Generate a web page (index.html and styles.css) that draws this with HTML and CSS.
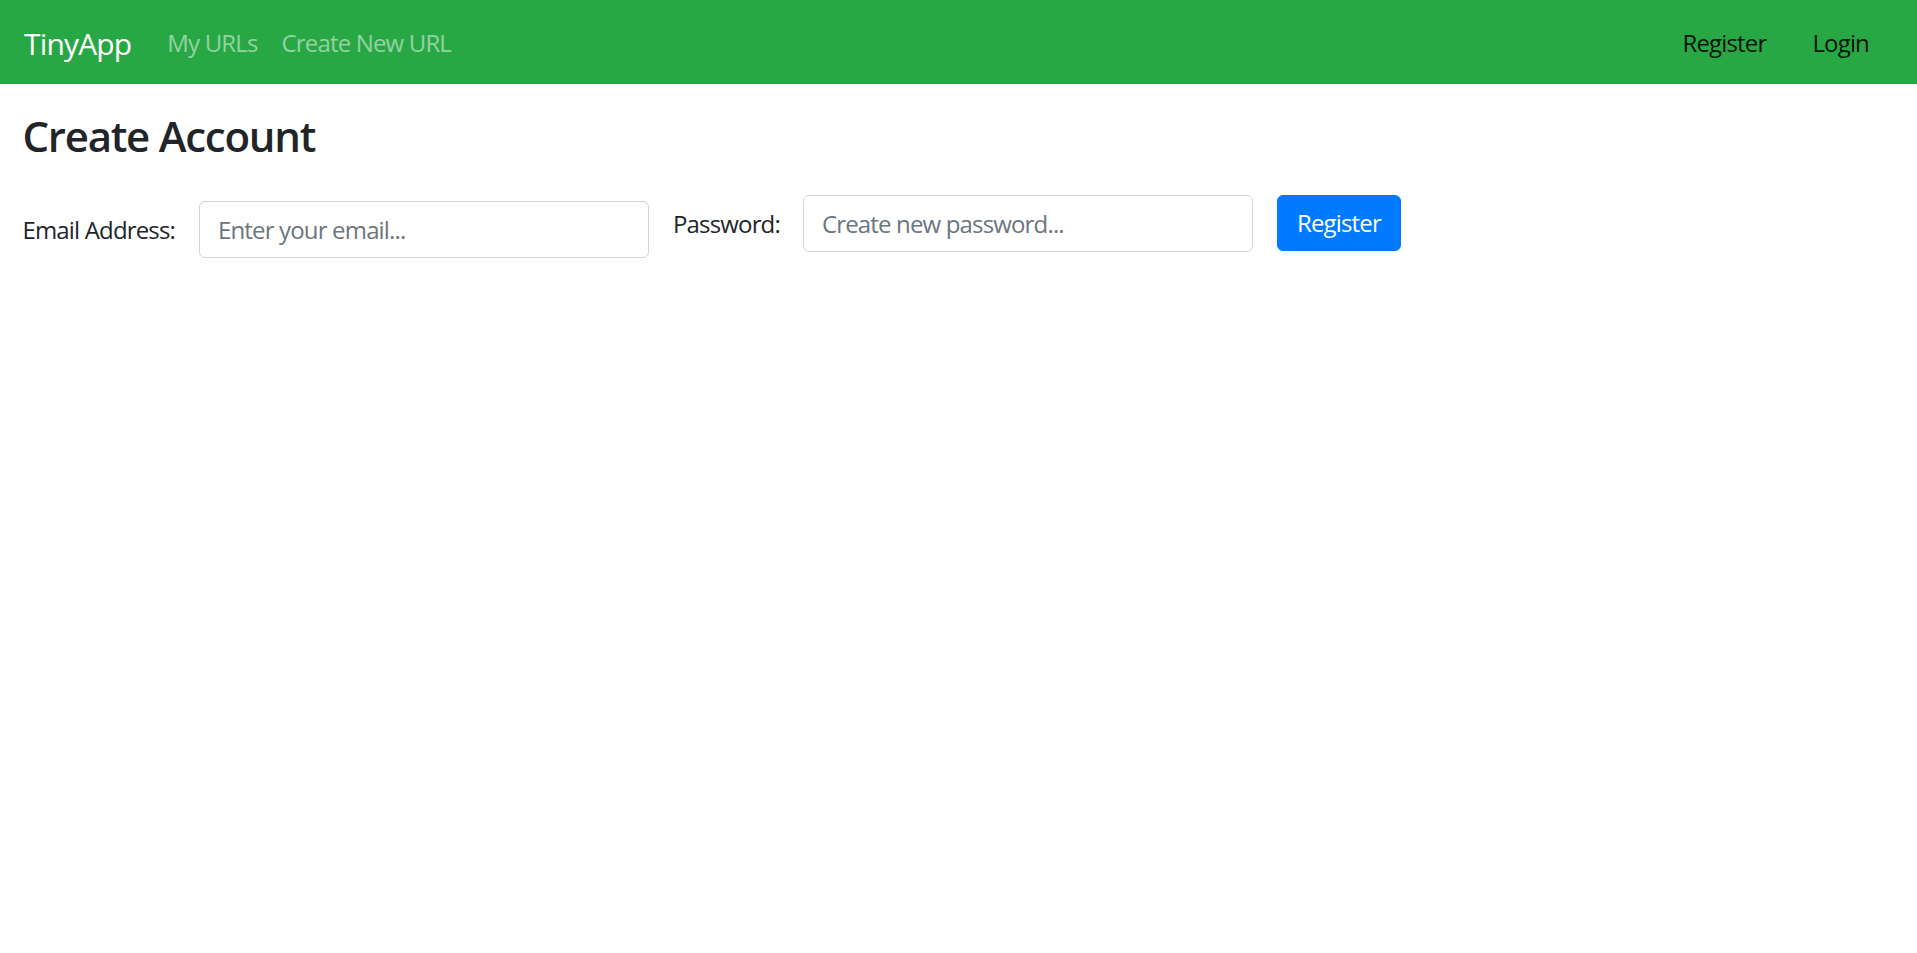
FILE: index.html
```html
<!DOCTYPE html>
<html lang="en">
<head>
<meta charset="utf-8">
<title>TinyApp - Register</title>
<link rel="stylesheet" href="styles.css">
</head>
<body>
<nav class="navbar">
  <a class="brand" href="#">TinyApp</a>
  <ul class="nav nav-left">
    <li><a class="nav-link nav-link-muted" href="#">My URLs</a></li>
    <li><a class="nav-link nav-link-muted" href="#">Create New URL</a></li>
  </ul>
  <ul class="nav nav-right">
    <li><a class="nav-link nav-link-dark" href="#">Register</a></li>
    <li><a class="nav-link nav-link-dark" href="#">Login</a></li>
  </ul>
</nav>
<main class="container">
  <h3 class="title">Create Account</h3>
  <form class="form-row">
    <div class="group group-email">
      <label class="label" for="email">Email Address:</label>
      <input class="control" id="email" type="email" placeholder="Enter your email...">
    </div>
    <div class="group group-password">
      <label class="label" for="password">Password:</label>
      <input class="control" id="password" type="password" placeholder="Create new password...">
    </div>
    <button class="btn" type="submit">Register</button>
  </form>
</main>
</body>
</html>
```

FILE: styles.css
```css
* { box-sizing: border-box; }

html, body {
  margin: 0;
  padding: 0;
  background: #ffffff;
}

body {
  font-family: "Open Sans", "Noto Sans", sans-serif;
  font-size: 24px;
  line-height: 1.5;
  color: #212529;
  letter-spacing: -0.035em;
}

a { text-decoration: none; }

.navbar {
  display: flex;
  align-items: center;
  height: 84px;
  padding: 2px 24px 0;
  background: #28a745;
}

.brand {
  font-size: 30px;
  line-height: 45px;
  color: #ffffff;
  margin-right: 24px;
  padding: 0;
}

.nav {
  display: flex;
  list-style: none;
  margin: 0;
  padding: 0;
}

.nav-left { flex: 1; }

.nav-right {
  gap: 22px;
  margin-right: 12px;
}

.nav-link {
  display: block;
  padding: 0 12px;
  line-height: 36px;
}

.nav-link-muted { color: rgba(255, 255, 255, 0.5); }
.nav-link-dark { color: rgba(0, 0, 0, 0.9); }

.container {
  padding: 27px 22.5px 25px;
}

.title {
  margin: 0 0 12px;
  font-size: 42px;
  font-weight: 600;
  line-height: 1.2;
  letter-spacing: -0.03em;
  color: #212529;
}

.form-row {
  display: flex;
  align-items: flex-start;
  gap: 24px;
  padding-top: 22px;
}

.group {
  display: flex;
  align-items: center;
  gap: 24px;
}

.group-email { margin-top: 6px; }
.group-password { gap: 23px; }

.label {
  color: #212529;
}

.control {
  width: 450px;
  height: 57px;
  padding: 9px 18px;
  font-family: inherit;
  font-size: 24px;
  letter-spacing: inherit;
  line-height: 1.5;
  color: #495057;
  background: #ffffff;
  border: 1px solid #ced4da;
  border-radius: 6px;
  outline: none;
}

.control::placeholder {
  color: #6c757d;
  opacity: 1;
}

.btn {
  height: 56px;
  padding: 0 19px;
  font-family: inherit;
  font-size: 24px;
  letter-spacing: inherit;
  line-height: 1.5;
  color: #ffffff;
  background: #007bff;
  border: 1px solid #007bff;
  border-radius: 6px;
  cursor: pointer;
}
```
